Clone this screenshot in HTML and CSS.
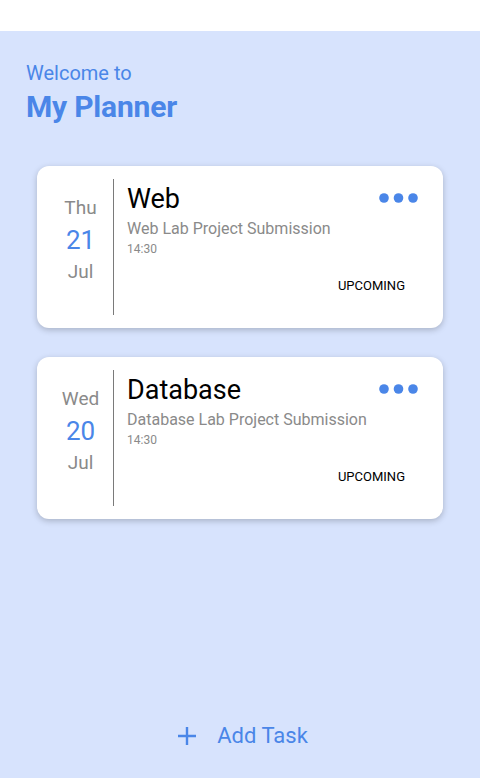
FILE: index.html
```html
<!DOCTYPE html>
<html>
<head>
<meta charset="utf-8">
<link rel="stylesheet" href="styles.css">
</head>
<body>
<div class="topbar"></div>
<main class="main">
  <header class="header">
    <div class="welcome">Welcome to</div>
    <h1 class="title">My Planner</h1>
  </header>
  <section class="list">
    <article class="card">
      <div class="date">
        <div class="dow">Thu</div>
        <div class="day">21</div>
        <div class="month">Jul</div>
      </div>
      <div class="divider"></div>
      <div class="content">
        <div class="row">
          <div class="task">Web</div>
          <svg class="dots" width="40" height="10" viewBox="0 0 40 10"><circle cx="5" cy="5" r="4.8"/><circle cx="19.5" cy="5" r="4.8"/><circle cx="34" cy="5" r="4.8"/></svg>
        </div>
        <div class="desc">Web Lab Project Submission</div>
        <div class="time">14:30</div>
        <div class="status">UPCOMING</div>
      </div>
    </article>
    <article class="card">
      <div class="date">
        <div class="dow">Wed</div>
        <div class="day">20</div>
        <div class="month">Jul</div>
      </div>
      <div class="divider"></div>
      <div class="content">
        <div class="row">
          <div class="task">Database</div>
          <svg class="dots" width="40" height="10" viewBox="0 0 40 10"><circle cx="5" cy="5" r="4.8"/><circle cx="19.5" cy="5" r="4.8"/><circle cx="34" cy="5" r="4.8"/></svg>
        </div>
        <div class="desc">Database Lab Project Submission</div>
        <div class="time">14:30</div>
        <div class="status">UPCOMING</div>
      </div>
    </article>
  </section>
  <button class="add">
    <svg class="plus" width="18" height="18" viewBox="0 0 18 18"><path d="M9 0V18M0 9H18" stroke="#4a86e8" stroke-width="2.4" fill="none"/></svg>
    <span>Add Task</span>
  </button>
</main>
</body>
</html>
```

FILE: styles.css
```css
* { box-sizing: border-box; }
html, body { margin: 0; padding: 0; }
body {
  width: 480px;
  height: 778px;
  overflow: hidden;
  font-family: Roboto, "Noto Sans", sans-serif;
  background: #ffffff;
}
.topbar { height: 31px; background: #ffffff; }
.main {
  height: 747px;
  background: #d7e3fd;
  display: flex;
  flex-direction: column;
}
.header { padding: 29px 26px 0; }
.welcome {
  color: #4a86e8;
  font-size: 20px;
  line-height: 26px;
}
.title {
  margin: 3px 0 0;
  color: #4a86e8;
  font-size: 30px;
  font-weight: 700;
  line-height: 36px;
  letter-spacing: -0.2px;
}
.list {
  margin-top: 41px;
  padding: 0 37px;
  display: flex;
  flex-direction: column;
  gap: 29px;
}
.card {
  height: 162px;
  background: #ffffff;
  border-radius: 12px;
  box-shadow: 0 2px 6px rgba(0, 0, 0, 0.22);
  display: flex;
  padding: 13px 0 13px 11px;
}
.date {
  width: 65px;
  padding-top: 13.5px;
  text-align: center;
}
.dow, .month {
  color: #8a8a8a;
  font-size: 19px;
  line-height: 30px;
}
.day {
  color: #4a86e8;
  font-size: 26px;
  line-height: 34px;
}
.divider { width: 1px; background: #7a7a7a; }
.content {
  flex: 1;
  padding: 2px 25px 0 13px;
  display: flex;
  flex-direction: column;
}
.row {
  display: flex;
  justify-content: space-between;
  align-items: flex-start;
}
.task {
  color: #000000;
  font-size: 27px;
  line-height: 36px;
}
.dots { fill: #4a86e8; margin-top: 12px; margin-right: -1px; }
.desc {
  margin-top: 2px;
  color: #8a8a8a;
  font-size: 16px;
  line-height: 20px;
}
.time {
  margin-top: 1.7px;
  color: #8a8a8a;
  font-size: 12px;
  line-height: 16px;
}
.status {
  margin-top: 21px;
  align-self: flex-end;
  margin-right: 13px;
  color: #000000;
  font-size: 13px;
  line-height: 16px;
}
.add {
  margin: auto 0 28px 6px;
  align-self: center;
  border: none;
  background: none;
  padding: 0;
  display: flex;
  align-items: center;
  gap: 21px;
  color: #4a86e8;
  font-family: Roboto, "Noto Sans", sans-serif;
  font-size: 22px;
  line-height: 28px;
}
.plus { display: block; }
```
